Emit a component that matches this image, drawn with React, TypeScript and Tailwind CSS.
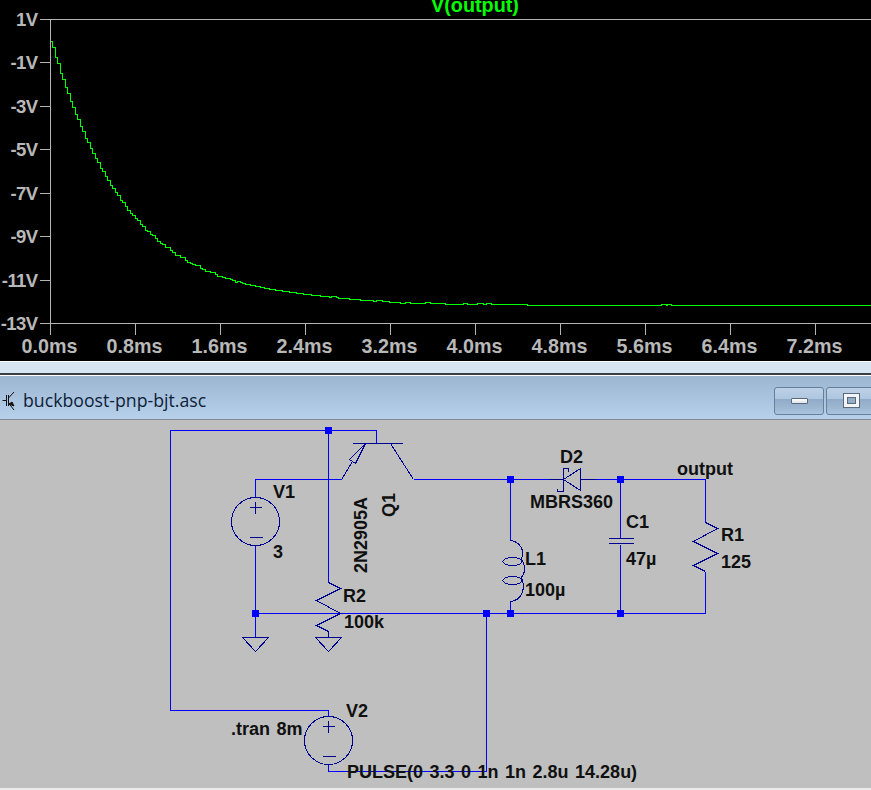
import React from "react";

const f = (x: number) => 305 - 265 * Math.exp(-(x - 50) / 76) - 2 * Math.exp(-(((x - 300) / 70) ** 2));

const bumps: [number, number, number][] = [
  [331, 335, -1],
  [376, 381, -1],
  [400, 404, 1],
  [425, 429, -1],
  [463, 466, -1],
  [477, 482, -1],
  [486, 490, -1],
  [661, 665, -1],
  [667, 670, -1],
];

function curve() {
  let d = `M50 41`;
  let prev = 41;
  const noise = [0, 1, 0, 0, -1, 0, 1, 0, 0, 0, -1, 0];
  let i = 0;
  for (let x = 50; x < 871; ) {
    const step = x < 260 ? 2 + (i % 2) : 1;
    const nx = x + step;
    let y = Math.round(f(nx));
    if (x > 120 && x < 240) y += noise[i % noise.length];
    for (const [a, b, dy] of bumps) if (nx >= a && nx <= b) y += dy;
    d += ` H${nx} V${y}`;
    prev = y;
    x = nx;
    i++;
  }
  return d + ` H871 V${prev}`;
}

const yTicks: [number, string][] = [
  [19, "1V"],
  [62, "-1V"],
  [106, "-3V"],
  [149, "-5V"],
  [193, "-7V"],
  [236, "-9V"],
  [280, "-11V"],
  [323, "-13V"],
];
const xTicks: [number, string][] = [
  [50, "0.0ms"],
  [135, "0.8ms"],
  [220, "1.6ms"],
  [305, "2.4ms"],
  [390, "3.2ms"],
  [475, "4.0ms"],
  [560, "4.8ms"],
  [645, "5.6ms"],
  [730, "6.4ms"],
  [815, "7.2ms"],
];

function Plot() {
  return (
    <div className="h-[361px] shrink-0 bg-black">
      <svg width="871" height="361" viewBox="0 0 871 361" className="block">
        <g shapeRendering="crispEdges" stroke="#b4b4b4" fill="none" transform="translate(0.5 0.5)">
          <path d="M39 19 H871 M50 19 V334 M39 323 H871" />
          {yTicks.map(([y]) => (
            <path key={y} d={`M39 ${y} H50`} />
          ))}
          {xTicks.map(([x]) => (
            <path key={x} d={`M${x} 323 V334`} />
          ))}
        </g>
        <path d={curve()} transform="translate(0.5 0.5)" stroke="#00ff00" fill="none" shapeRendering="crispEdges" />
        <text x="475" y="12" textAnchor="middle" fill="#00ff00" className="font-['Liberation_Sans'] font-bold text-[19.8px]">
          V(output)
        </text>
        {yTicks.map(([y, t]) => (
          <text key={t} x="37.5" y={y + 7} textAnchor="end" fill="#b8b8b8" className="font-['Liberation_Sans'] font-bold text-[18.5px] tracking-[-0.6px]">
            {t}
          </text>
        ))}
        {xTicks.map(([x, t]) => (
          <text key={t} x={x - 0.5} y="353" textAnchor="middle" fill="#b8b8b8" className="font-['Liberation_Sans'] font-bold text-[19.7px]">
            {t}
          </text>
        ))}
      </svg>
    </div>
  );
}

function Sym({ x, y, children, rotate }: { x: number; y: number; children: React.ReactNode; rotate?: boolean }) {
  return (
    <text
      x={x}
      y={y}
      transform={rotate ? `rotate(-90 ${x} ${y})` : undefined}
      fill="#101010"
      className="font-['Liberation_Sans'] font-bold text-[18px] [word-spacing:1.5px]"
    >
      {children}
    </text>
  );
}

const wires = [
  "M328 430 H170 V710 H328 V716",
  "M328 430 H376 V443",
  "M328 430 V582",
  "M255 497 V479 H341",
  "M413 479 H548",
  "M595 479 H705 V522",
  "M255 545 V637",
  "M255 613 H705 V571",
  "M328 764 V771 H486 V613",
  "M510 479 V540",
  "M510 601 V613",
  "M620 479 V538",
  "M620 544 V613",
];

const comps = [
  // BJT
  "M352 443 H402",
  "M341 479 L352 461",
  "M390 443 L413 479",
  "M365 443 L349 459 L355 463 Z",
  // R2
  "M328 582 L340 588 L316 600 L340 613 L316 625 L328 631 V637",
  "M315 637 H341 L328 651 Z",
  "M242 637 H268 L255 651 Z",
  // V plus/minus
  "M249 507 H261 M255 501 V513 M249 537 H262",
  "M322 726 H334 M328 720 V732 M322 756 H335",
  // diode
  "M548 479 H563 M580 479 H595",
  "M563 479 L580 468 V490 L563 479",
  "M568 471 V468 H563 V491 H557 V488",
  // inductor
  "M510 540 C520 541 525 552 521 558 C525 565 525 572 521 577 C526 590 520 600 510 601",
  // cap
  "M608 538 H633 M608 543 H633",
  // R1
  "M705 522 L717 528 L693 541 L717 553 L693 565 L705 571",
];

const dots: [number, number][] = [
  [328, 430],
  [510, 479],
  [620, 479],
  [255, 613],
  [486, 613],
  [510, 613],
  [620, 613],
];

function Schematic() {
  return (
    <div className="h-[368px] shrink-0 bg-[#bfbfbf]">
      <svg width="871" height="368" viewBox="0 420 871 368" className="block">
        <g transform="translate(0.5 0.5)" fill="none" shapeRendering="crispEdges">
          <g stroke="#0000ff">
            {wires.map((d) => (
              <path key={d} d={d} />
            ))}
          </g>
          <g stroke="#000090">
            {comps.map((d) => (
              <path key={d} d={d} />
            ))}
            <circle cx="255" cy="521" r="24" />
            <circle cx="328" cy="740" r="24" />
            <ellipse cx="512" cy="561" rx="9.5" ry="4" />
            <ellipse cx="512" cy="580" rx="9.5" ry="4" />
          </g>
          {dots.map(([x, y]) => (
            <rect key={`${x}-${y}`} x={x - 3} y={y - 3} width="6" height="6" fill="#0000ff" stroke="#0000ff" />
          ))}
        </g>
        <Sym x={273} y={498}>V1</Sym>
        <Sym x={273} y={558}>3</Sym>
        <Sym x={343} y={602}>R2</Sym>
        <Sym x={344} y={628}>100k</Sym>
        <Sym x={367} y={573} rotate>2N2905A</Sym>
        <Sym x={395} y={517} rotate>Q1</Sym>
        <Sym x={560} y={463}>D2</Sym>
        <Sym x={530} y={508}>MBRS360</Sym>
        <Sym x={677} y={475}>output</Sym>
        <Sym x={626} y={528}>C1</Sym>
        <Sym x={626} y={565}>47µ</Sym>
        <Sym x={721} y={541}>R1</Sym>
        <Sym x={721} y={568}>125</Sym>
        <Sym x={525} y={565}>L1</Sym>
        <Sym x={525} y={596}>100µ</Sym>
        <Sym x={346} y={717}>V2</Sym>
        <Sym x={231} y={735}>.tran 8m</Sym>
        <Sym x={347} y={778}>PULSE(0 3.3 0 1n 1n 2.8u 14.28u)</Sym>
      </svg>
    </div>
  );
}

function WinButton({ children }: { children: React.ReactNode }) {
  return (
    <div className="flex h-[28px] w-[50px] shrink-0 items-center justify-center rounded-[3px] border border-[#66809c] bg-[linear-gradient(to_bottom,#bcd1e7_0%,#aec6df_42%,#90abc8_43%,#9db7d2_75%,#aac4de_100%)]">
      {children}
    </div>
  );
}

function TitleBar() {
  return (
    <div className="flex h-[44px] shrink-0 items-center border-b border-[#808b96] bg-gradient-to-b from-[#9cb6d2] to-[#b7d1eb] pt-[6px]">
      <svg width="14" height="24" viewBox="0 0 14 24" className="ml-[2px] shrink-0" fill="none" stroke="#111">
        <path d="M0.5 11.5 H4.5 M4.5 6 V17 M6.5 6 V17 M6.5 9 L12 3 M6.5 14 L12 21" />
        <path d="M7 15 L12 17 L10 13 Z" fill="#111" />
      </svg>
      <span className="ml-[7px] font-['Open_Sans'] text-[17.7px] text-[#0e1e38]">buckboost-pnp-bjt.asc</span>
      <div className="ml-auto mr-[-5px] flex gap-[2px]">
        <WinButton>
          <div className="mt-[1px] h-[6px] w-[17px] rounded-[1px] border border-[#5a6a7c] bg-[linear-gradient(to_bottom,#ffffff,#dfe4ea)]" />
        </WinButton>
        <WinButton>
          <div className="mt-[-1px] flex h-[15px] w-[17px] items-center justify-center border border-[#5a6a7c] bg-[#f2f4f7]">
            <div className="h-[7px] w-[9px] border border-[#5a6a7c] bg-[#94aeca]" />
          </div>
        </WinButton>
      </div>
    </div>
  );
}

export default function App() {
  return (
    <div className="flex h-[790px] w-[871px] flex-col overflow-hidden bg-[#ebebeb]">
      <Plot />
      <div className="h-[1px] shrink-0 bg-white" />
      <div className="h-[11px] shrink-0 bg-[#d7e4f2]" />
      <div className="h-[2px] shrink-0 bg-[#3a3d42]" />
      <div className="h-[1px] shrink-0 bg-white" />
      <TitleBar />
      <Schematic />
    </div>
  );
}
